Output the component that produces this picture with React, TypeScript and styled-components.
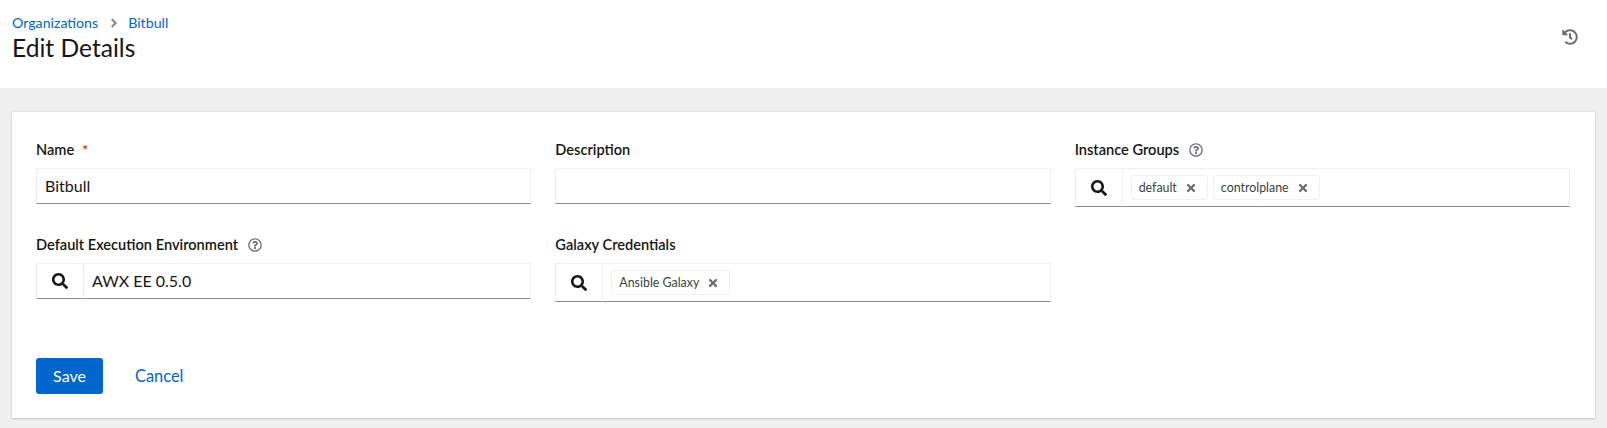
import styled, { createGlobalStyle } from "styled-components";
import { FaAngleRight, FaHistory, FaRegQuestionCircle, FaSearch, FaTimes } from "react-icons/fa";

const fontStack = `"Lato", "Liberation Sans", sans-serif`;

const GlobalStyle = createGlobalStyle`
  html, body {
    margin: 0;
    padding: 0;
    background: #f0f0f0;
    font-family: ${fontStack};
    color: #151515;
  }
  * { box-sizing: border-box; }
`;

type ChipProps = { label: string };

const ChipItem = ({ label }: ChipProps) => (
  <Chip>
    {label}
    <ChipClose>
      <FaTimes />
    </ChipClose>
  </Chip>
);

const App = () => {
  return (
    <Page>
      <GlobalStyle />
      <Header>
        <div>
          <Breadcrumb>
            <CrumbLink href="#">Organizations</CrumbLink>
            <CrumbDivider>
              <FaAngleRight />
            </CrumbDivider>
            <CrumbLink href="#">Bitbull</CrumbLink>
          </Breadcrumb>
          <Title>Edit Details</Title>
        </div>
        <HistoryButton>
          <FaHistory />
        </HistoryButton>
      </Header>

      <Main>
        <Card>
          <FormGrid>
            <Field>
              <Label>
                Name <Required>*</Required>
              </Label>
              <TextInput defaultValue="Bitbull" />
            </Field>
            <Field>
              <Label>Description</Label>
              <TextInput />
            </Field>
            <Field>
              <Label>
                Instance Groups
                <Help>
                  <FaRegQuestionCircle />
                </Help>
              </Label>
              <LookupGroup>
                <SearchButton>
                  <FaSearch />
                </SearchButton>
                <ChipArea>
                  <ChipItem label="default" />
                  <ChipItem label="controlplane" />
                </ChipArea>
              </LookupGroup>
            </Field>
            <Field>
              <Label>
                Default Execution Environment
                <Help>
                  <FaRegQuestionCircle />
                </Help>
              </Label>
              <LookupGroup>
                <SearchButton>
                  <FaSearch />
                </SearchButton>
                <LookupInput defaultValue="AWX EE 0.5.0" />
              </LookupGroup>
            </Field>
            <Field>
              <Label>Galaxy Credentials</Label>
              <LookupGroup>
                <SearchButton>
                  <FaSearch />
                </SearchButton>
                <ChipArea>
                  <ChipItem label="Ansible Galaxy" />
                </ChipArea>
              </LookupGroup>
            </Field>
          </FormGrid>
          <Actions>
            <SaveButton>Save</SaveButton>
            <CancelButton>Cancel</CancelButton>
          </Actions>
        </Card>
      </Main>
    </Page>
  );
};

const Page = styled.div`
  min-height: 428px;
  background: #f0f0f0;
`;

const Header = styled.header`
  height: 88px;
  background: #fff;
  padding: 12px 29px 0 12px;
  display: flex;
  justify-content: space-between;
  align-items: flex-start;
`;

const Breadcrumb = styled.nav`
  display: flex;
  align-items: center;
  height: 21px;
  font-size: 14.2px;
`;

const CrumbLink = styled.a`
  color: #06c;
  text-decoration: none;
`;

const CrumbDivider = styled.span`
  display: flex;
  align-items: center;
  margin: 0 7px 0 9px;
  font-size: 14px;
  color: #8a8d90;
`;

const Title = styled.h1`
  margin: 0;
  font-size: 24.6px;
  line-height: 29px;
  font-weight: 400;
`;

const HistoryButton = styled.span`
  display: flex;
  margin-top: 17px;
  font-size: 16px;
  color: #6a6e73;
`;

const Main = styled.main`
  padding: 24px 12px 11px;
`;

const Card = styled.section`
  height: 306px;
  background: #fff;
  padding: 27px 25px 24px 24px;
  box-shadow: 0 1px 2px rgba(3, 3, 3, 0.16), 0 0 2px rgba(3, 3, 3, 0.1);
  display: flex;
  flex-direction: column;
  justify-content: space-between;
`;

const FormGrid = styled.div`
  display: grid;
  grid-template-columns: repeat(3, 1fr);
  column-gap: 24px;
  row-gap: 27px;
`;

const Field = styled.div`
  min-width: 0;
`;

const Label = styled.label`
  display: flex;
  align-items: center;
  height: 21px;
  margin-bottom: 8px;
  font-size: 14.6px;
  font-weight: 600;
`;

const Required = styled.span`
  margin-left: 8px;
  color: #c9190b;
  font-size: 14px;
`;

const Help = styled.span`
  display: flex;
  margin-left: 10px;
  font-size: 14px;
  color: #6a6e73;
`;

const TextInput = styled.input`
  display: block;
  width: 100%;
  height: 36px;
  padding: 0 8px 2px;
  border: 1px solid #f0f0f0;
  border-bottom-color: #8a8d90;
  border-radius: 0;
  outline: none;
  background: #fff;
  font: 400 16px ${fontStack};
  color: #151515;
`;

const LookupGroup = styled.div`
  display: flex;
  align-items: stretch;
  min-height: 36px;
`;

const SearchButton = styled.span`
  flex: none;
  width: 48px;
  display: flex;
  align-items: center;
  justify-content: center;
  border: 1px solid #f0f0f0;
  border-bottom-color: #8a8d90;
  font-size: 16px;
  color: #151515;
`;

const LookupInput = styled(TextInput)`
  flex: 1;
  min-width: 0;
  border-left: none;
`;

const ChipArea = styled.div`
  flex: 1;
  display: flex;
  align-items: center;
  gap: 5px;
  padding: 6px 8px;
  border: 1px solid #f0f0f0;
  border-left: none;
  border-bottom-color: #8a8d90;
`;

const Chip = styled.span`
  display: inline-flex;
  align-items: center;
  height: 25px;
  padding: 0 10px 0 7px;
  border: 1px solid #f0f0f0;
  border-radius: 3px;
  font-size: 12.4px;
  color: #3c3f42;
`;

const ChipClose = styled.span`
  display: flex;
  margin-left: 8px;
  font-size: 12px;
  color: #6a6e73;
`;

const Actions = styled.div`
  display: flex;
  align-items: center;
  gap: 16px;
`;

const SaveButton = styled.button`
  width: 67px;
  height: 36px;
  padding: 0 0 2px;
  border: none;
  border-radius: 3px;
  background: #06c;
  color: #fff;
  font: 400 16px ${fontStack};
`;

const CancelButton = styled.button`
  height: 36px;
  padding: 0 16px 2px;
  border: none;
  background: none;
  color: #06c;
  font: 400 16.4px ${fontStack};
`;

export default App;
